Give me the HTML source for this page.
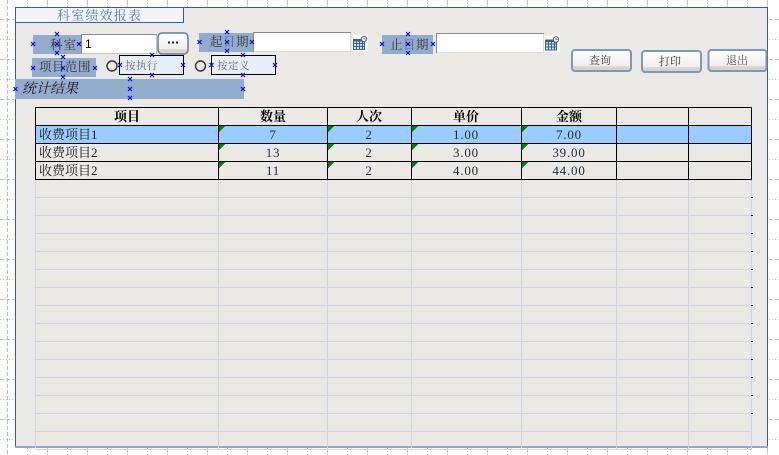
<!DOCTYPE html>
<html><head><meta charset="utf-8"><style>
html,body{margin:0;padding:0;background:#fff;width:779px;height:455px;overflow:hidden}
svg{display:block}
text{font-family:"Liberation Serif","Noto Serif CJK SC",serif;font-size:12px;fill:#222}
.c{text-anchor:middle}
.h{font-weight:bold;font-size:13px;fill:#000}
.n{font-family:"Liberation Serif","Noto Serif CJK SC",serif;font-size:13px;letter-spacing:.8px;fill:#1c2a3c}
.g{fill:#666;font-size:10.5px}
.l{font-size:12.5px;fill:#333}
</style></head><body>
<svg width="779" height="455" viewBox="0 0 779 455" xmlns="http://www.w3.org/2000/svg">
<defs>
<linearGradient id="bt" x1="0" y1="0" x2="0" y2="1"><stop offset="0" stop-color="#fff"/><stop offset=".75" stop-color="#f1efec"/><stop offset=".8" stop-color="#d8d4cc"/><stop offset="1" stop-color="#d8d4cc"/></linearGradient>
<g id="x"><path d="M-2-2L2 2M2-2L-2 2" stroke="#0808e8" stroke-width="1.2" fill="none"/></g>
<g id="cal">
<rect x="-1" y="-1" width="16" height="16" fill="#fff"/>
<rect x="0.5" y="3.500" width="11" height="10" fill="#d3dcea" stroke="#3d5f8c"/>
<path d="M0 4.500H12" stroke="#3d5f8c" stroke-width="2"/>
<path d="M1 7.500H11M1 10.500H11M3.500 5V13M6.500 5V13M9.500 5V13" stroke="#3d5f8c" fill="none" shape-rendering="crispEdges"/>
<circle cx="11" cy="3" r="2.700" fill="#fff" stroke="#3d5f8c"/>
<path d="M11 1.500V3H12.500" stroke="#3d5f8c" stroke-width=".8" fill="none"/>
</g>
</defs>
<g shape-rendering="crispEdges" fill="none" stroke="#bdbdbd">
<path d="M7.5 0V455" stroke-dasharray="4 2"/>
<path d="M47.5 0V7M87.5 0V7M127.5 0V7M167.5 0V7M207.5 0V7M247.5 0V7M287.5 0V7M327.5 0V7M367.5 0V7M407.5 0V7M447.5 0V7M487.5 0V7M527.5 0V7M567.5 0V7M607.5 0V7M647.5 0V7M687.5 0V7M727.5 0V7M767.5 0V7M47.5 448V455M87.5 448V455M127.5 448V455M167.5 448V455M207.5 448V455M247.5 448V455M287.5 448V455M327.5 448V455M367.5 448V455M407.5 448V455M447.5 448V455M487.5 448V455M527.5 448V455M567.5 448V455M607.5 448V455M647.5 448V455M687.5 448V455M727.5 448V455M767.5 448V455" stroke-dasharray="5 1"/>
<path d="M27.5 0V7M67.5 0V7M107.5 0V7M147.5 0V7M187.5 0V7M227.5 0V7M267.5 0V7M307.5 0V7M347.5 0V7M387.5 0V7M427.5 0V7M467.5 0V7M507.5 0V7M547.5 0V7M587.5 0V7M627.5 0V7M667.5 0V7M707.5 0V7M747.5 0V7M27.5 448V455M67.5 448V455M107.5 448V455M147.5 448V455M187.5 448V455M227.5 448V455M267.5 448V455M307.5 448V455M347.5 448V455M387.5 448V455M427.5 448V455M467.5 448V455M507.5 448V455M547.5 448V455M587.5 448V455M627.5 448V455M667.5 448V455M707.5 448V455M747.5 448V455" stroke-dasharray="1 2"/>
<path d="M0 19.5H14M0 59.5H14M0 99.5H14M0 139.5H14M0 179.5H14M0 219.5H14M0 259.5H14M0 299.5H14M0 339.5H14M0 379.5H14M0 419.5H14M769 19.5H779M769 59.5H779M769 99.5H779M769 139.5H779M769 179.5H779M769 219.5H779M769 259.5H779M769 299.5H779M769 339.5H779M769 379.5H779M769 419.5H779" stroke-dasharray="4 2"/>
<path d="M0 39.5H14M0 79.5H14M0 119.5H14M0 159.5H14M0 199.5H14M0 239.5H14M0 279.5H14M0 319.5H14M0 359.5H14M0 399.5H14M0 439.5H14M769 39.5H779M769 79.5H779M769 119.5H779M769 159.5H779M769 199.5H779M769 239.5H779M769 279.5H779M769 319.5H779M769 359.5H779M769 399.5H779M769 439.5H779" stroke-dasharray="1 2"/>
</g>
<g shape-rendering="crispEdges">
<rect x="15" y="7" width="752" height="440" fill="#ebe9e6"/>
<rect x="15" y="7" width="1" height="440" fill="#2f5f9e"/>
<rect x="15" y="7" width="753" height="1" fill="#2f5f9e"/>
<rect x="767" y="7" width="1" height="440" fill="#2f5f9e"/>
<rect x="15" y="446" width="753" height="2" fill="#92a9cc"/>
<rect x="15.5" y="7.5" width="168" height="15" fill="#f3f3f8" stroke="#2f5f9e"/>
<rect x="36" y="125" width="715" height="18" fill="#99ccff"/>
<g fill="none" stroke="#ccd4e4">
<path d="M35.5 179V449M218.5 179V449M327.5 179V449M411.5 179V449M521.5 179V449M616.5 179V449M688.5 179V449M751.5 179V449"/>
<path d="M36 197.5H752M36 215.5H752M36 233.5H752M36 251.5H752M36 269.5H752M36 287.5H752M36 305.5H752M36 323.5H752M36 341.5H752M36 359.5H752M36 377.5H752M36 395.5H752M36 413.5H752M36 431.5H752M36 449.5H752" />
</g>
<path d="M751 197h2v1h-2zM751 215h2v1h-2zM751 233h2v1h-2zM751 251h2v1h-2zM751 269h2v1h-2zM751 287h2v1h-2zM751 305h2v1h-2zM751 323h2v1h-2zM751 341h2v1h-2zM751 359h2v1h-2zM751 377h2v1h-2zM751 395h2v1h-2zM751 413h2v1h-2z" fill="#000"/>
<g fill="none" stroke="#000">
<path d="M35.5 107V180M218.5 107V180M327.5 107V180M411.5 107V180M521.5 107V180M616.5 107V180M688.5 107V180M751.5 107V180"/>
<path d="M35 107.5H752M35 125.5H752M35 143.5H752M35 161.5H752M35 179.5H752"/>
</g>
<rect x="33" y="35" width="48" height="19" fill="#93abcd"/>
<rect x="199" y="33" width="54" height="19" fill="#93abcd"/>
<rect x="382" y="35" width="51" height="19" fill="#93abcd"/>
<rect x="32" y="58" width="64" height="19" fill="#93abcd"/>
<rect x="15" y="79" width="229" height="20" fill="#93abcd"/>
<rect x="81.5" y="34.5" width="75" height="19" fill="#fff" stroke="#c8c6c0"/>
<path d="M81.5 54V34.5H157" stroke="#8a8a86" fill="none"/>
<rect x="253.5" y="32.5" width="97" height="19" fill="#fff" stroke="#dedcd8"/>
<path d="M253.5 52V32.5H351" stroke="#8a8a86" fill="none"/>
<rect x="436.5" y="33.5" width="107" height="19" fill="#fff" stroke="#dedcd8"/>
<path d="M436.5 53V33.5H544" stroke="#8a8a86" fill="none"/>
<rect x="119.5" y="55.5" width="64" height="19" fill="#e8eef7" stroke="#000"/>
<rect x="211.5" y="55.5" width="64" height="19" fill="#e8eef7" stroke="#000"/>
</g>
<g fill="#008000" shape-rendering="crispEdges">
<path d="M219 126h6l-6 6zM328 126h6l-6 6zM412 126h6l-6 6zM522 126h6l-6 6zM219 144h6l-6 6zM328 144h6l-6 6zM412 144h6l-6 6zM522 144h6l-6 6zM219 162h6l-6 6zM328 162h6l-6 6zM412 162h6l-6 6zM522 162h6l-6 6z"/>
</g>
<rect x="158" y="33" width="30" height="21" rx="4" fill="url(#bt)" stroke="#5a80a8" stroke-width="1.5"/>
<path d="M168 41.500h2v2h-2zM172 41.500h2v2h-2zM176 41.500h2v2h-2z" fill="#222"/>
<rect x="572" y="50" width="59" height="21" rx="3" fill="url(#bt)" stroke="#7a9ab8" stroke-width="2"/>
<rect x="642" y="51" width="59" height="21" rx="3" fill="url(#bt)" stroke="#7a9ab8" stroke-width="2"/>
<rect x="708.500" y="50" width="58" height="21" rx="3" fill="url(#bt)" stroke="#7a9ab8" stroke-width="2"/>
<text x="600" y="64" class="c g" style="font-size:11px;fill:#444">查询</text>
<text x="670" y="65" class="c g" style="font-size:11px;fill:#333">打印</text>
<text x="737" y="64" class="c g" style="font-size:11px;fill:#555">退出</text>
<circle cx="112" cy="66" r="5" fill="none" stroke="#333" stroke-width="1.4"/>
<circle cx="200.500" cy="66" r="5" fill="none" stroke="#333" stroke-width="1.4"/>
<use href="#cal" x="353" y="36"/>
<use href="#cal" x="545" y="36.500"/>
<text x="57" y="20" style="font-size:13px;letter-spacing:1.2px;fill:#4f7fbf">科室绩效报表</text>
<text x="50" y="49" class="l" style="letter-spacing:1px">科室</text>
<text x="85" y="48" style="font-family:'Liberation Sans',sans-serif;font-size:12px;fill:#000">1</text>
<text x="210" y="46" class="l">起</text>
<text x="223" y="46" class="l" style="fill:#4f6a8f">日</text>
<text x="236" y="46" class="l">期</text>
<text x="390" y="49" class="l">止</text>
<text x="403" y="49" class="l" style="fill:#4f6a8f">日</text>
<text x="416" y="49" class="l">期</text>
<text x="39" y="71" class="l" style="letter-spacing:.5px">项目范围</text>
<text x="125" y="69" class="g" style="letter-spacing:.5px">按执行</text>
<text x="217" y="69" class="g" style="letter-spacing:.5px">按定义</text>
<text x="22" y="93" style="font-size:14px;font-style:italic;fill:#1a1a1a">统计结果</text>
<text x="127" y="121" class="c h">项目</text>
<text x="273" y="121" class="c h">数量</text>
<text x="369" y="121" class="c h">人次</text>
<text x="466" y="121" class="c h">单价</text>
<text x="569" y="121" class="c h">金额</text>
<text x="39" y="139" style="font-size:13px;fill:#1a1a1a">收费项目1</text>
<text x="39" y="157" style="font-size:13px;fill:#1a1a1a">收费项目2</text>
<text x="39" y="175" style="font-size:13px;fill:#1a1a1a">收费项目2</text>
<text x="273" y="139" class="c n">7</text><text x="369" y="139" class="c n">2</text><text x="466" y="139" class="c n">1.00</text><text x="569" y="139" class="c n">7.00</text>
<text x="273" y="157" class="c n">13</text><text x="369" y="157" class="c n">2</text><text x="466" y="157" class="c n">3.00</text><text x="569" y="157" class="c n">39.00</text>
<text x="273" y="175" class="c n">11</text><text x="369" y="175" class="c n">2</text><text x="466" y="175" class="c n">4.00</text><text x="569" y="175" class="c n">44.00</text>
<g>
<use href="#x" x="33" y="44"/><use href="#x" x="57" y="34"/><use href="#x" x="57" y="44"/><use href="#x" x="57" y="53"/><use href="#x" x="79" y="44"/>
<use href="#x" x="33" y="68"/><use href="#x" x="63" y="57"/><use href="#x" x="63" y="68"/><use href="#x" x="63" y="77"/><use href="#x" x="95" y="68"/>
<use href="#x" x="152" y="55"/><use href="#x" x="120" y="65"/><use href="#x" x="183" y="65"/><use href="#x" x="152" y="75"/>
<use href="#x" x="227" y="32"/><use href="#x" x="199.500" y="42"/><use href="#x" x="227" y="42"/><use href="#x" x="227" y="51"/><use href="#x" x="252" y="42"/>
<use href="#x" x="243" y="55"/><use href="#x" x="211.500" y="65"/><use href="#x" x="275" y="65"/><use href="#x" x="243" y="75"/>
<use href="#x" x="130" y="79"/><use href="#x" x="15.500" y="89"/><use href="#x" x="130" y="89"/><use href="#x" x="243" y="89"/><use href="#x" x="130" y="98"/>
<use href="#x" x="408" y="34"/><use href="#x" x="382" y="44"/><use href="#x" x="408" y="44"/><use href="#x" x="433" y="44"/><use href="#x" x="408" y="53"/>
</g>
</svg>
</body></html>
